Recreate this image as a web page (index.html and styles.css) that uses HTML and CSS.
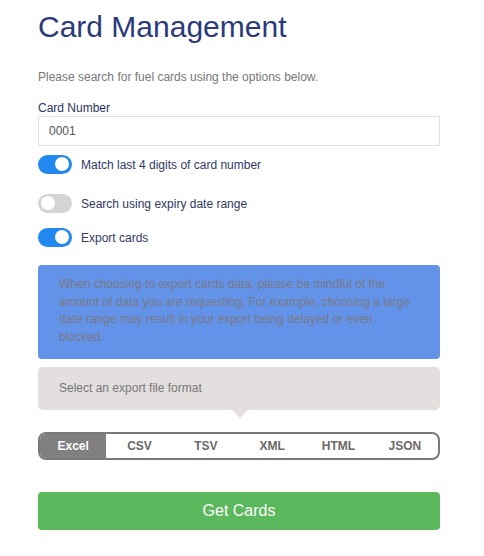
FILE: index.html
```html
<!DOCTYPE html>
<html>
<head>
<meta charset="utf-8">
<link rel="stylesheet" href="styles.css">
</head>
<body>
<div class="page">
  <h1 class="title">Card Management</h1>
  <p class="intro">Please search for fuel cards using the options below.</p>
  <label class="field-label">Card Number</label>
  <div class="input">0001</div>

  <div class="toggle-row row1">
    <span class="switch on"><span class="knob"></span></span>
    <span class="toggle-label">Match last 4 digits of card number</span>
  </div>
  <div class="toggle-row row2">
    <span class="switch"><span class="knob"></span></span>
    <span class="toggle-label">Search using expiry date range</span>
  </div>
  <div class="toggle-row row3">
    <span class="switch on"><span class="knob"></span></span>
    <span class="toggle-label">Export cards</span>
  </div>

  <div class="notice">When choosing to export cards data, please be mindful of the amount of data you are requesting. For example, choosing a large date range may result in your export being delayed or even blocked.</div>

  <div class="bubble">Select an export file format</div>

  <div class="segments">
    <span class="seg active">Excel</span>
    <span class="seg">CSV</span>
    <span class="seg">TSV</span>
    <span class="seg">XML</span>
    <span class="seg">HTML</span>
    <span class="seg">JSON</span>
  </div>

  <div class="button">Get Cards</div>
</div>
</body>
</html>
```
FILE: styles.css
```css
* { box-sizing: border-box; }
html, body { margin: 0; padding: 0; background: #fff; }
body { font-family: "Liberation Sans", Arial, sans-serif; }
.page {
  display: flex;
  flex-direction: column;
  width: 402px;
  margin-left: 38px;
  padding-top: 10px;
}
.title {
  margin: 0;
  font-size: 30px;
  font-weight: normal;
  line-height: 33px;
  color: #2a3a7b;
}
.intro {
  margin: 27px 0 0 0;
  font-size: 12px;
  line-height: 14px;
  color: #777;
}
.field-label {
  margin-top: 17px;
  font-size: 12px;
  line-height: 14px;
  color: #2c3560;
}
.input {
  margin-top: 1px;
  height: 30px;
  border: 1px solid #e0e0e0;
  padding: 0 10px;
  font-size: 12px;
  line-height: 28px;
  color: #555;
}
.toggle-row {
  display: flex;
  align-items: center;
  height: 20px;
}
.row1 { margin-top: 8px; }
.row2 { margin-top: 19px; }
.row3 { margin-top: 14px; }
.switch {
  position: relative;
  width: 34px;
  height: 19px;
  border-radius: 10px;
  background: #d4d4d4;
  flex: none;
}
.switch.on { background: #2188f0; }
.knob {
  position: absolute;
  top: 2.5px;
  left: 3px;
  width: 14px;
  height: 14px;
  border-radius: 50%;
  background: #fff;
}
.switch.on .knob { left: auto; right: 3px; }
.toggle-label {
  margin-left: 9px;
  padding-top: 2px;
  font-size: 12px;
  color: #2f3866;
}
.notice {
  margin-top: 18px;
  background: #6392e9;
  border-radius: 4px;
  padding: 11px 21px 13px 21px;
  font-size: 12px;
  line-height: 17.5px;
  color: #7a7a86;
}
.bubble {
  position: relative;
  margin-top: 8px;
  height: 43px;
  background: #e3dfdf;
  border-radius: 5px;
  padding: 0 21px;
  font-size: 12px;
  line-height: 43px;
  color: #777;
}
.bubble::after {
  content: "";
  position: absolute;
  left: 194px;
  bottom: -8px;
  border-left: 8px solid transparent;
  border-right: 8px solid transparent;
  border-top: 8px solid #e3dfdf;
}
.segments {
  margin-top: 22px;
  display: flex;
  height: 28px;
  border: 2px solid #7a7a7a;
  border-radius: 8px;
  overflow: hidden;
}
.seg {
  flex: 1;
  text-align: center;
  font-size: 12px;
  font-weight: bold;
  line-height: 24px;
  color: #6a6a6a;
}
.seg.active {
  background: #808080;
  color: #fff;
}
.button {
  margin-top: 32px;
  height: 38px;
  background: #5cb85c;
  border-radius: 4px;
  text-align: center;
  font-size: 16px;
  line-height: 38px;
  color: #fff;
}
```
